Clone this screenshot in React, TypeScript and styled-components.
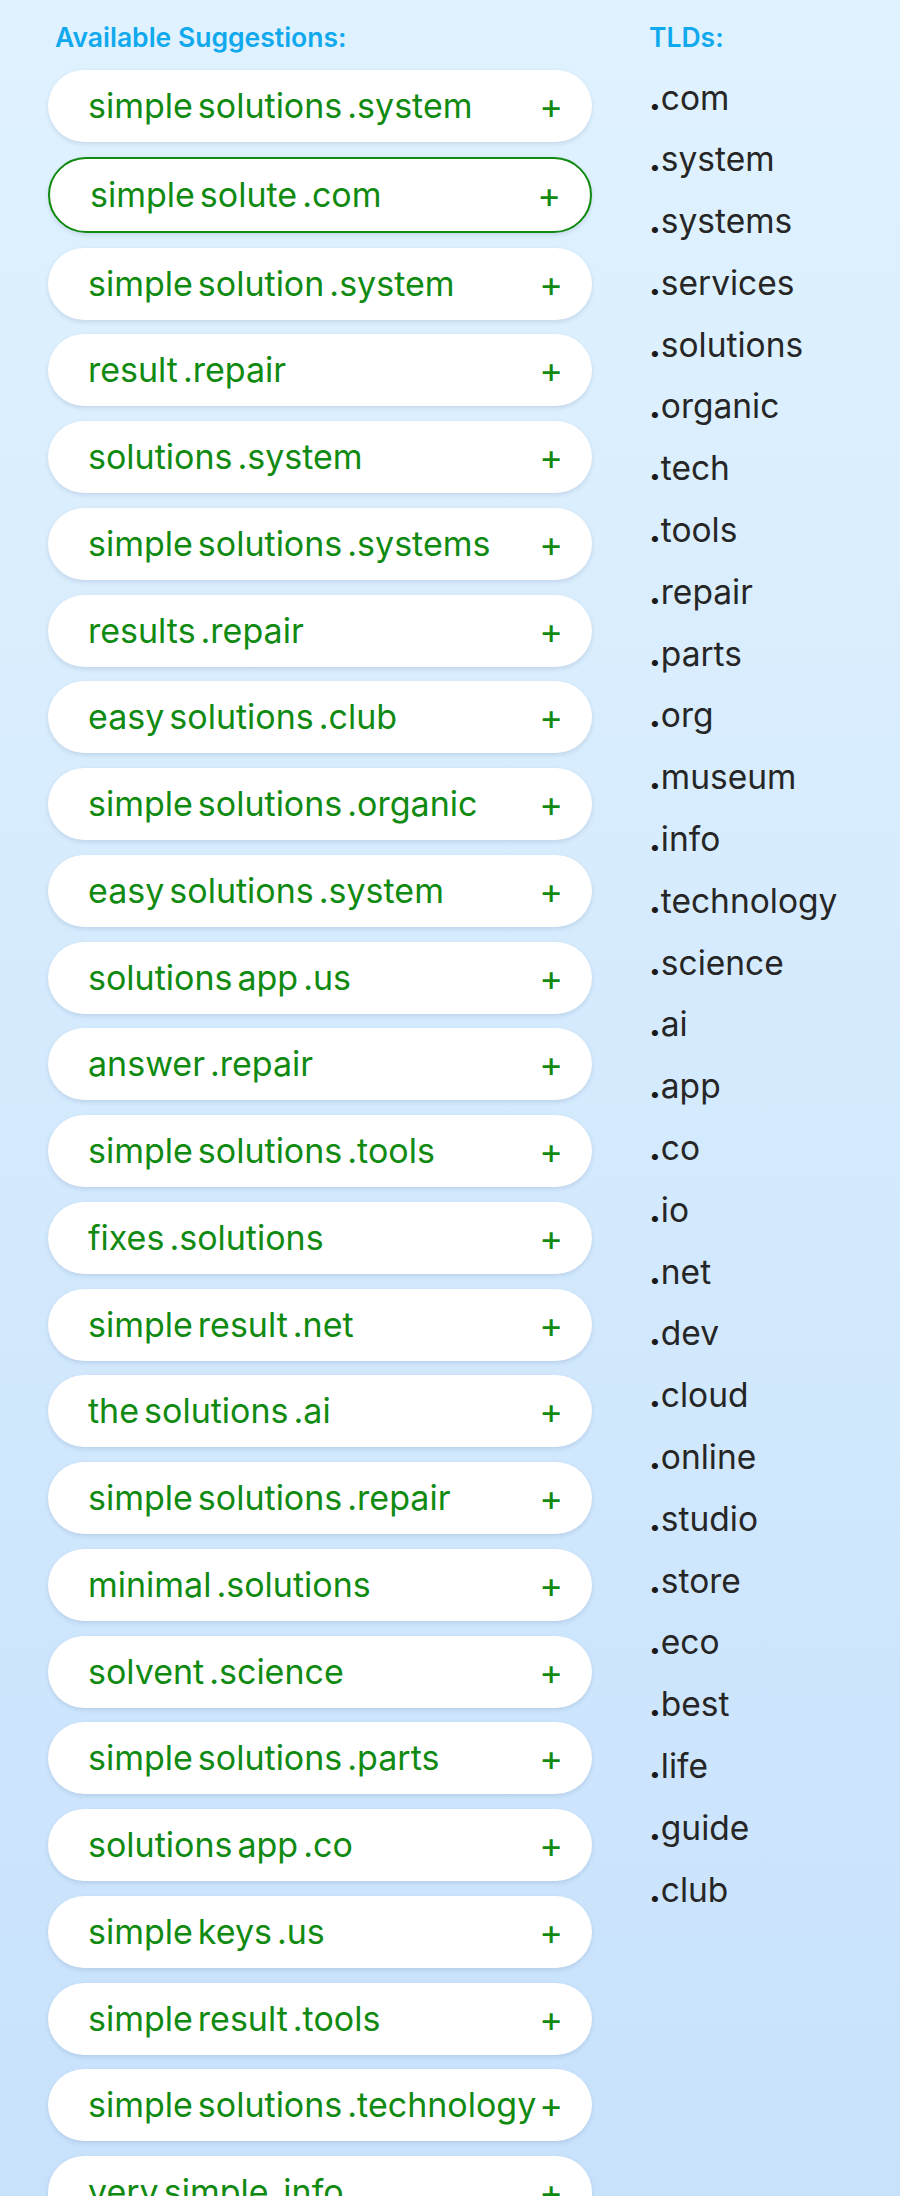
import React from 'react';
import styled, { createGlobalStyle } from 'styled-components';

const Global = createGlobalStyle`
  html, body { margin: 0; padding: 0; }
  body {
    font-family: Inter, "Noto Sans", "Liberation Sans", sans-serif;
    background: linear-gradient(180deg, #e0f2fe 0%, #c8e2fc 100%);
    min-height: 2196px;
  }
`;

const Page = styled.div`
  display: grid;
  grid-template-columns: 544px 1fr;
  column-gap: 57px;
  padding: 0 0 0 48px;
  height: 2196px;
  overflow: hidden;
  box-sizing: border-box;
`;

const Column = styled.section`
  display: flex;
  flex-direction: column;
`;

const Heading = styled.h2<{ $inset?: number }>`
  margin: 0;
  padding: 21px 0 0 ${(p) => p.$inset ?? 0}px;
  height: 54px;
  box-sizing: border-box;
  font-size: 26.5px;
  line-height: 33px;
  font-weight: 600;
  color: #11a9ee;
`;

const List = styled.ul`
  list-style: none;
  margin: 16px 0 0;
  padding: 0;
  display: flex;
  flex-direction: column;
  gap: 14.75px;
`;

const Pill = styled.li<{ $active?: boolean }>`
  display: flex;
  align-items: center;
  justify-content: space-between;
  height: 72px;
  padding: 0 29px 0 40px;
  border-radius: 40px;
  background: #ffffff;
  border: ${(p) => (p.$active ? '2px solid #118a11' : 'none')};
  box-shadow: 0 2px 4px rgba(60, 90, 130, 0.16);
  flex-shrink: 0;
`;

const Domain = styled.span`
  display: flex;
  gap: 5px;
  font-size: 34px;
  line-height: 40px;
  color: #118a11;
  white-space: nowrap;
`;

const Plus = styled.span`
  font-size: 36px;
  font-weight: 400;
  line-height: 40px;
  color: #118a11;
`;

const TldList = styled.ul`
  list-style: none;
  margin: 13.5px 0 0;
  padding: 0;
  display: flex;
  flex-direction: column;
`;

const Tld = styled.li`
  font-size: 33.5px;
  line-height: 61.8px;
  color: #262626;
`;

const Dot = styled.b`
  font-weight: 800;
  color: #1a1a1a;
`;

const suggestions: { parts: string[]; active?: boolean }[] = [
  { parts: ['simple', 'solutions', '.system'] },
  { parts: ['simple', 'solute', '.com'], active: true },
  { parts: ['simple', 'solution', '.system'] },
  { parts: ['result', '.repair'] },
  { parts: ['solutions', '.system'] },
  { parts: ['simple', 'solutions', '.systems'] },
  { parts: ['results', '.repair'] },
  { parts: ['easy', 'solutions', '.club'] },
  { parts: ['simple', 'solutions', '.organic'] },
  { parts: ['easy', 'solutions', '.system'] },
  { parts: ['solutions', 'app', '.us'] },
  { parts: ['answer', '.repair'] },
  { parts: ['simple', 'solutions', '.tools'] },
  { parts: ['fixes', '.solutions'] },
  { parts: ['simple', 'result', '.net'] },
  { parts: ['the', 'solutions', '.ai'] },
  { parts: ['simple', 'solutions', '.repair'] },
  { parts: ['minimal', '.solutions'] },
  { parts: ['solvent', '.science'] },
  { parts: ['simple', 'solutions', '.parts'] },
  { parts: ['solutions', 'app', '.co'] },
  { parts: ['simple', 'keys', '.us'] },
  { parts: ['simple', 'result', '.tools'] },
  { parts: ['simple', 'solutions', '.technology'] },
  { parts: ['very', 'simple', '.info'] },
];

const tlds = [
  'com', 'system', 'systems', 'services', 'solutions', 'organic', 'tech', 'tools',
  'repair', 'parts', 'org', 'museum', 'info', 'technology', 'science', 'ai', 'app',
  'co', 'io', 'net', 'dev', 'cloud', 'online', 'studio', 'store', 'eco', 'best',
  'life', 'guide', 'club',
];

export default function App() {
  return (
    <>
      <Global />
      <Page>
        <Column>
          <Heading $inset={7}>Available Suggestions:</Heading>
          <List>
            {suggestions.map((s, i) => (
              <Pill key={i} $active={s.active}>
                <Domain>
                  {s.parts.map((p, j) => (
                    <span key={j}>{p}</span>
                  ))}
                </Domain>
                <Plus>+</Plus>
              </Pill>
            ))}
          </List>
        </Column>
        <Column>
          <Heading>TLDs:</Heading>
          <TldList>
            {tlds.map((t) => (
              <Tld key={t}>
                <Dot>.</Dot>
                {t}
              </Tld>
            ))}
          </TldList>
        </Column>
      </Page>
    </>
  );
}
